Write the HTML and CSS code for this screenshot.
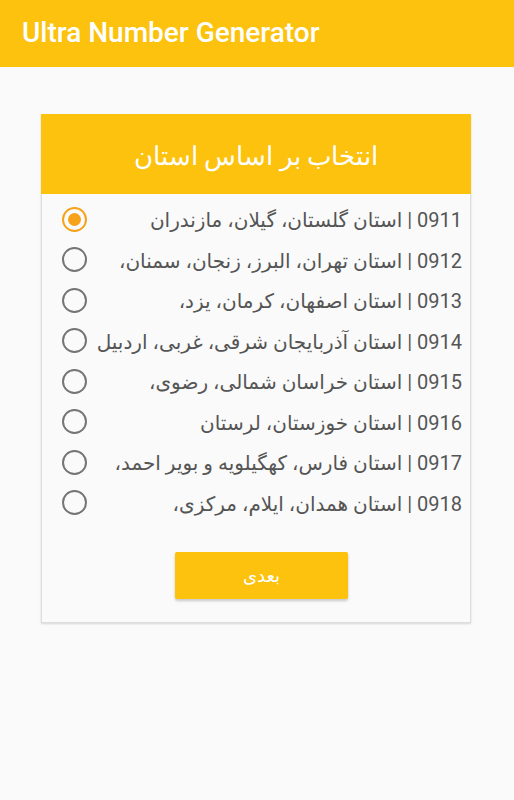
FILE: index.html
```html
<!DOCTYPE html>
<html lang="fa">
  <head>
    <meta charset="UTF-8" />
    <meta name="viewport" content="width=device-width, initial-scale=1.0" />
    <title>Ultra Number Generator</title>
    <link rel="stylesheet" href="styles.css">
  </head>
  <body>
    <header class="appbar">
      <h1>Ultra Number Generator</h1>
    </header>
    <main class="content">
      <div class="card">
        <div class="card-head">انتخاب بر اساس استان</div>
        <div class="list">
          <label class="row">
            <span class="radio checked"></span>
            <span class="label">0911 | استان گلستان، گیلان، مازندران</span>
          </label>
          <label class="row">
            <span class="radio"></span>
            <span class="label">0912 | استان تهران، البرز، زنجان، سمنان،</span>
          </label>
          <label class="row">
            <span class="radio"></span>
            <span class="label">0913 | استان اصفهان، کرمان، یزد،</span>
          </label>
          <label class="row">
            <span class="radio"></span>
            <span class="label">0914 | استان آذربایجان شرقی، غربی، اردبیل</span>
          </label>
          <label class="row">
            <span class="radio"></span>
            <span class="label">0915 | استان خراسان شمالی، رضوی،</span>
          </label>
          <label class="row">
            <span class="radio"></span>
            <span class="label">0916 | استان خوزستان، لرستان</span>
          </label>
          <label class="row">
            <span class="radio"></span>
            <span class="label">0917 | استان فارس، کهگیلویه و بویر احمد،</span>
          </label>
          <label class="row">
            <span class="radio"></span>
            <span class="label">0918 | استان همدان، ایلام، مرکزی،</span>
          </label>
        </div>
        <div class="actions">
          <button class="next">بعدی</button>
        </div>
      </div>
    </main>
  </body>
</html>
```

FILE: styles.css
```css
* {
  margin: 0;
  padding: 0;
  box-sizing: border-box;
}
body {
  background-color: #fafafa;
  font-family: Roboto, "DejaVu Sans", sans-serif;
  width: 514px;
  height: 800px;
}
.appbar {
  height: 67px;
  background-color: #fcc20d;
  display: flex;
  align-items: center;
  padding-left: 22px;
}
.appbar h1 {
  color: #fff;
  font-size: 28px;
  font-weight: 500;
  margin-top: -2px;
}
.content {
  padding: 47px 43px 0 41px;
}
.card {
  background-color: #fafafa;
  border: 1px solid #dedede;
  border-top: none;
  box-shadow: 0 1px 2px rgba(0, 0, 0, 0.15);
}
.card-head {
  height: 80px;
  margin: 0 -1px;
  padding-top: 4px;
  background-color: #fcc20d;
  color: #fff;
  font-size: 26px;
  font-weight: 300;
  direction: rtl;
  display: flex;
  align-items: center;
  justify-content: center;
}
.list {
  padding: 5px 8px 0 20px;
}
.row {
  height: 40.5px;
  display: flex;
  align-items: center;
}
.radio {
  width: 25px;
  height: 25px;
  border: 2px solid #757575;
  border-radius: 50%;
  flex: none;
  display: flex;
  align-items: center;
  justify-content: center;
}
.radio.checked {
  border-color: #f7a21b;
}
.radio.checked::after {
  content: "";
  width: 13px;
  height: 13px;
  border-radius: 50%;
  background-color: #f7a21b;
}
.label {
  flex: 1;
  direction: rtl;
  text-align: right;
  font-size: 20px;
  color: #555;
  white-space: nowrap;
  margin-top: 2px;
}
.actions {
  display: flex;
  justify-content: center;
  padding: 29px 0 23px;
  margin-left: 11px;
}
.next {
  width: 173px;
  height: 47px;
  border: none;
  border-radius: 2px;
  background-color: #fcc20d;
  color: #fff;
  font-family: Roboto, "DejaVu Sans", sans-serif;
  font-size: 18px;
  box-shadow: 0 2px 3px rgba(0, 0, 0, 0.2);
}
```
